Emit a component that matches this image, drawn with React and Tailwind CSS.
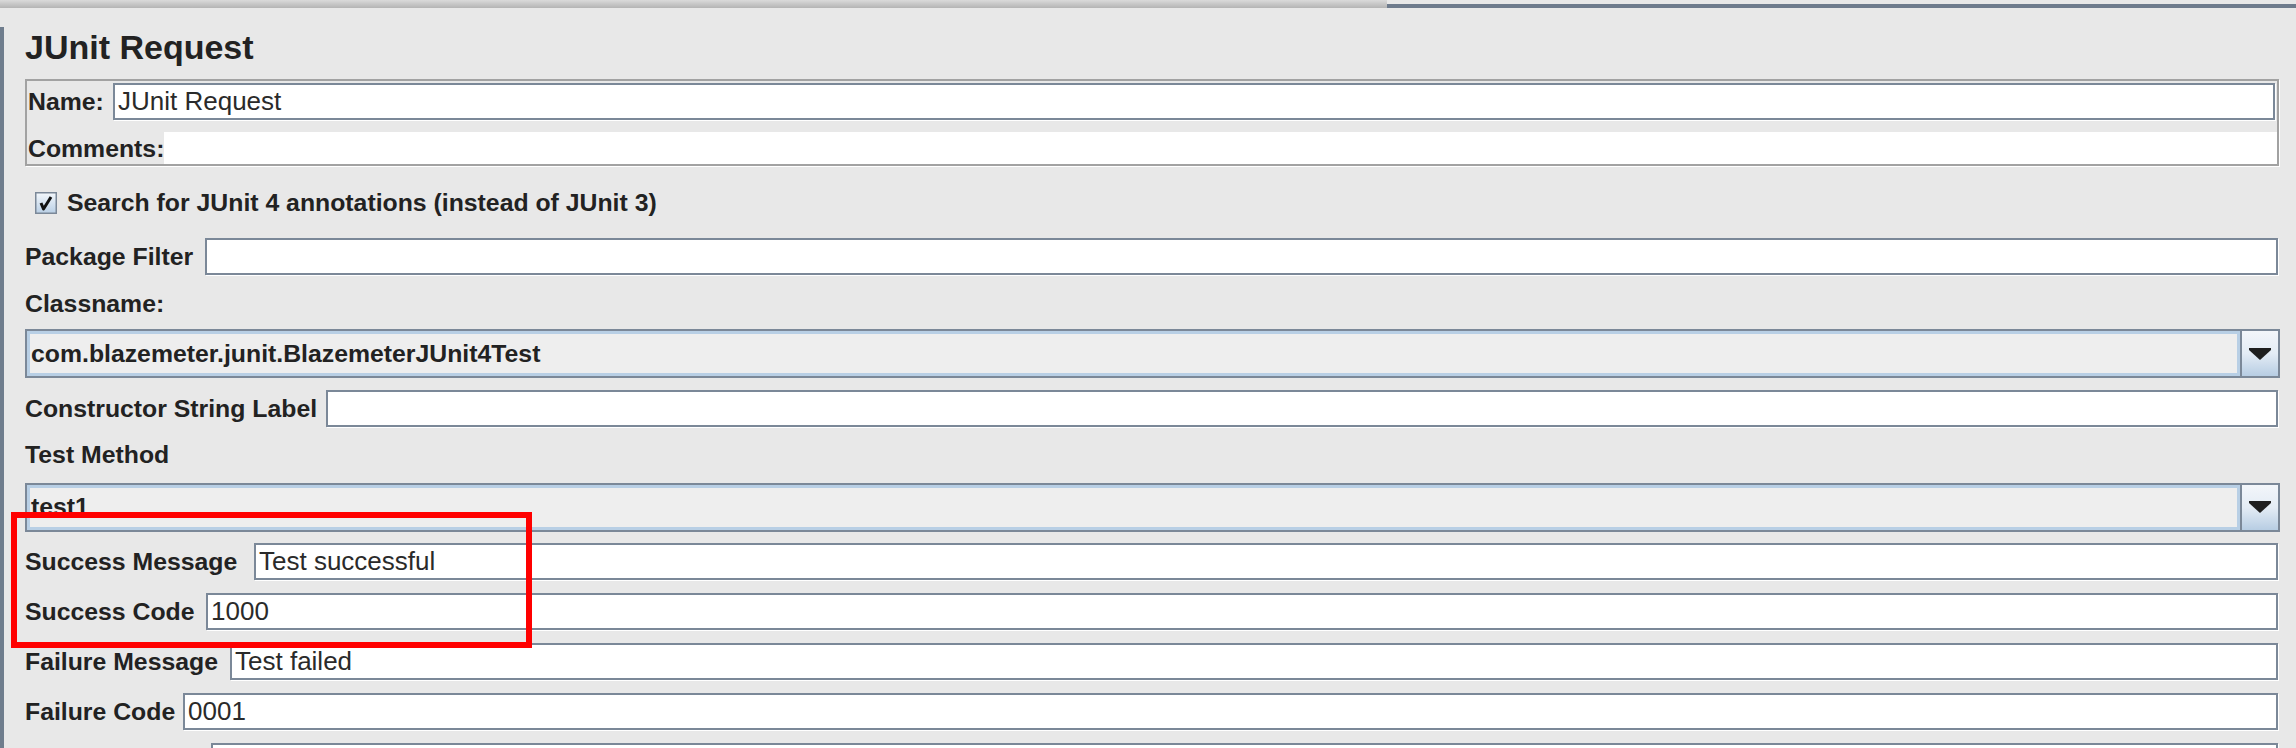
import React from 'react';

const LABEL = "font-bold text-[24.8px] text-[#222222] whitespace-nowrap shrink-0";

const TextField = ({ value, className = '' }) => (
  <div className={`h-[37px] bg-white border-2 border-[#7b8898] shadow-[1px_1px_0_#ffffff] flex items-center pl-[3px] text-[26px] text-[#2a2a2a] whitespace-nowrap overflow-hidden ${className}`}>
    {value}
  </div>
);

// label + text field on one line
const FieldRow = ({ label, value, labelWidth, className = '' }) => (
  <div className={`flex items-center mr-[2px] ${className}`}>
    <span className={`${LABEL} ${labelWidth}`}>{label}</span>
    <TextField value={value} className="flex-1" />
  </div>
);

const Combo = ({ value, className = '' }) => (
  <div className={`h-[49px] flex border-2 border-[#7b8898] ${className}`}>
    <div className="flex-1 flex items-center bg-[#eeeeee] border-[3px] border-[#b8cfe5] pl-[1px] font-bold text-[24.8px] text-[#222222] whitespace-nowrap">
      {value}
    </div>
    <div className="w-[38px] border-l-2 border-[#7b8898] bg-linear-to-b from-[#f3f6fa] via-[#e4ecf5] to-[#b7cde3] flex items-center justify-center">
      <svg width="22" height="12" viewBox="0 0 22 12">
        <path d="M0 0H22V2L11 12L0 2Z" fill="#1f1f1f" />
      </svg>
    </div>
  </div>
);

const CheckBox = () => (
  <svg width="22" height="22" viewBox="0 0 22 22" className="shrink-0">
    <defs>
      <linearGradient id="cb" x1="0" y1="0" x2="0" y2="1">
        <stop offset="0" stopColor="#f4f8fc" />
        <stop offset="1" stopColor="#b9cfe5" />
      </linearGradient>
    </defs>
    <rect x="0.75" y="0.75" width="20.5" height="20.5" fill="url(#cb)" stroke="#7b8898" strokeWidth="1.5" />
    <path d="M6 11L8.5 17L16 5" fill="none" stroke="#111111" strokeWidth="3" strokeLinejoin="round" />
  </svg>
);

export default function App() {
  return (
    <div className="relative w-[2296px] h-[748px] overflow-hidden bg-[#e8e8e8] font-['Liberation_Sans',Arial,sans-serif]">
      {/* top edge */}
      <div className="flex h-[8px]">
        <div className="w-[1387px] bg-linear-to-b from-[#dadada] to-[#b4b4b4]" />
        <div className="flex-1 flex flex-col">
          <div className="h-[4px] bg-[#e8e8e8]" />
          <div className="h-[4px] bg-[#6e7b8c]" />
        </div>
      </div>

      <div className="h-[740px] border-l-4 border-[#6f7d8d] pl-[21px] pr-[16px]">
        <div className="mt-[19px] h-[40px] leading-[40px] text-[34px] font-bold text-[#222222]">JUnit Request</div>

        {/* name / comments */}
        <div className="mt-[12px] mr-[1px] border-2 border-[#a2a2a2] shadow-[1px_1px_0_#ffffff]">
          <div className="flex items-center pt-[2px] pl-[1px] pr-[2px]">
            <span className={`${LABEL} w-[85px]`}>Name:</span>
            <TextField value="JUnit Request" className="flex-1" />
          </div>
          <div className="mt-[12px] flex h-[32px] items-center">
            <span className={`${LABEL} w-[137px] pl-[1px]`}>Comments:</span>
            <div className="flex-1 h-full bg-white" />
          </div>
        </div>

        <div className="mt-[18px] h-[37px] flex items-center pl-[10px] gap-[10px]">
          <CheckBox />
          <span className={LABEL}>Search for JUnit 4 annotations (instead of JUnit 3)</span>
        </div>

        <FieldRow className="mt-[17px]" label="Package Filter" labelWidth="w-[180px]" value="" />

        <div className="mt-[10px] h-[37px] flex items-center">
          <span className={LABEL}>Classname:</span>
        </div>
        <Combo className="mt-[7px]" value="com.blazemeter.junit.BlazemeterJUnit4Test" />

        <FieldRow className="mt-[12px]" label="Constructor String Label" labelWidth="w-[301px]" value="" />

        <div className="mt-[9px] h-[37px] flex items-center">
          <span className={LABEL}>Test Method</span>
        </div>
        <Combo className="mt-[9px]" value="test1" />

        <FieldRow className="mt-[11px]" label="Success Message" labelWidth="w-[229px]" value="Test successful" />
        <FieldRow className="mt-[13px]" label="Success Code" labelWidth="w-[181px]" value="1000" />
        <FieldRow className="mt-[13px]" label="Failure Message" labelWidth="w-[205px]" value="Test failed" />
        <FieldRow className="mt-[13px]" label="Failure Code" labelWidth="w-[158px]" value="0001" />
        {/* next row, its label falls below the visible area */}
        <FieldRow className="mt-[13px]" label="" labelWidth="w-[186px]" value="" />
      </div>

      {/* highlight */}
      <div className="absolute left-[11px] top-[512px] w-[521px] h-[136px] border-[6px] border-[#ff0000] pointer-events-none" />
    </div>
  );
}
